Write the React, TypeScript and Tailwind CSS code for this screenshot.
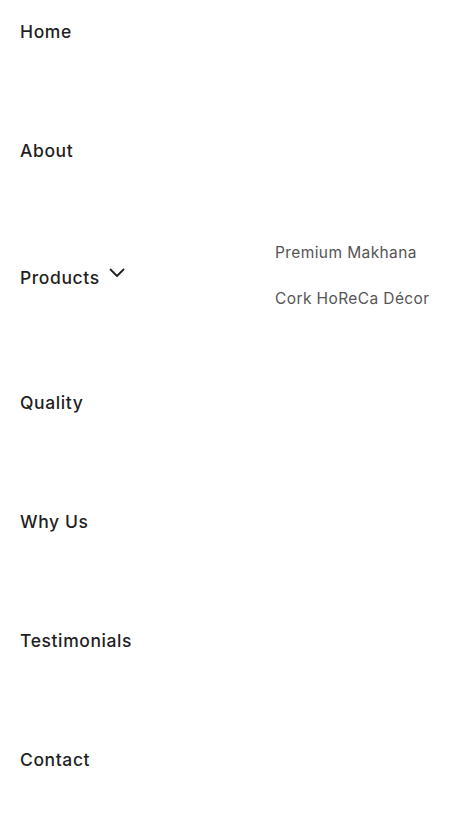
import React from 'react';

const links = ['Home', 'About', 'Products', 'Quality', 'Why Us', 'Testimonials', 'Contact'];

const App = () => {
  return (
    <nav className="w-[454px] min-h-[816px] bg-white pt-px font-['Inter',sans-serif]">
      <ul className="flex flex-col gap-[57px] px-5">
        {links.map((link) =>
          link === 'Products' ? (
            <li key={link} className="flex h-[76px] items-center">
              {/* Products with dropdown */}
              <a href="#" className="mt-[3px] flex items-center text-[17.5px] font-medium tracking-[0.6px] text-[#1f1f1f]">
                {link}
                <svg width="16" height="10" viewBox="0 0 16 10" className="-mt-[12px] ml-[9px]" fill="none">
                  <path d="M1.5 1.5 L8 8 L14.5 1.5" stroke="#1f1f1f" strokeWidth="1.8" strokeLinecap="round" strokeLinejoin="round" />
                </svg>
              </a>
              <ul className="ml-auto flex w-[159px] flex-col gap-[26px] self-start pt-1 text-[15.5px] tracking-[0.4px] text-[#555555]">
                <li className="h-5 leading-5">Premium Makhana</li>
                <li className="h-5 leading-5">Cork HoReCa Décor</li>
              </ul>
            </li>
          ) : (
            <li key={link} className="flex h-[62px] items-center">
              <a href="#" className="text-[17.5px] font-medium tracking-[0.6px] text-[#1f1f1f]">
                {link}
              </a>
            </li>
          )
        )}
      </ul>
    </nav>
  );
};

export default App;
